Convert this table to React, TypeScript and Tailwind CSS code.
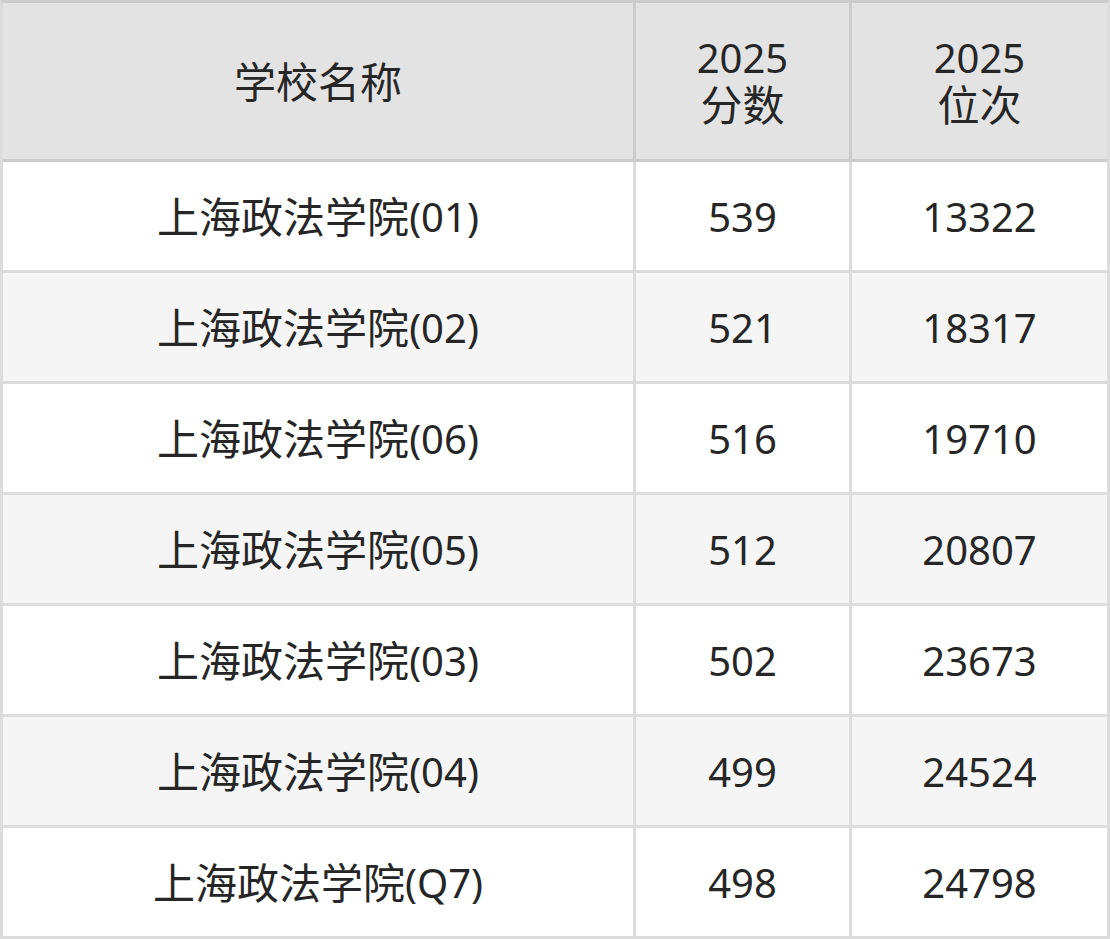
const rows = [
  ['上海政法学院', '(01)', '539', '13322'],
  ['上海政法学院', '(02)', '521', '18317'],
  ['上海政法学院', '(06)', '516', '19710'],
  ['上海政法学院', '(05)', '512', '20807'],
  ['上海政法学院', '(03)', '502', '23673'],
  ['上海政法学院', '(04)', '499', '24524'],
  ['上海政法学院', '(Q7)', '498', '24798'],
]

export default function App() {
  return (
    <div
      className="w-[1110px] h-[939px] bg-white text-[#262626] text-[40px] leading-[47px]"
      style={{ fontFamily: '"Noto Sans", "Noto Sans CJK SC", sans-serif' }}
    >
      <div className="flex flex-col border-[3px] border-[#dcdcdc] border-t-[#cccccc]">
        {/* header */}
        <div className="flex h-[159px] bg-[#e3e3e3] border-b-[3px] border-[#cccccc]">
          <div className="w-[630px] flex items-center justify-center text-[42px]">学校名称</div>
          <div className="w-[216px] border-l-[3px] border-[#cccccc] flex flex-col items-center justify-center">
            <span>2025</span>
            <span className="text-[42px]">分数</span>
          </div>
          <div className="flex-1 border-l-[3px] border-[#cccccc] flex flex-col items-center justify-center">
            <span>2025</span>
            <span className="text-[42px]">位次</span>
          </div>
        </div>
        {rows.map((r, i) => (
          <div
            key={i}
            className={`flex ${i > 0 ? 'h-[111px] border-t-[3px] border-[#dcdcdc]' : 'h-[108px]'} ${i % 2 === 1 ? 'bg-[#f5f5f5]' : 'bg-white'}`}
          >
            <div className="w-[630px] flex items-center justify-center">
              <span className="text-[42px]">{r[0]}</span>
              <span>{r[1]}</span>
            </div>
            <div className="w-[216px] border-l-[3px] border-[#dcdcdc] flex items-center justify-center">{r[2]}</div>
            <div className="flex-1 border-l-[3px] border-[#dcdcdc] flex items-center justify-center">{r[3]}</div>
          </div>
        ))}
      </div>
    </div>
  )
}
